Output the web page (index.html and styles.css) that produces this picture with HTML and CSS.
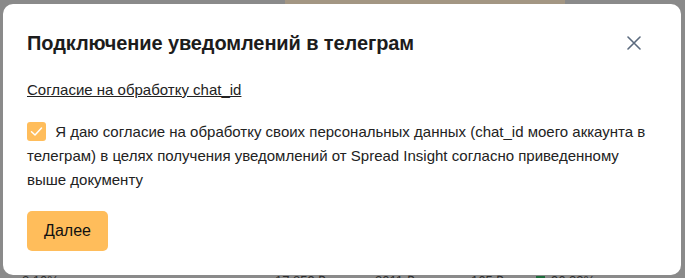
FILE: index.html
```html
<!DOCTYPE html>
<html>
<head>
	<meta charset="utf-8">
	<title>Подключение уведомлений</title>
	<link rel="stylesheet" href="styles.css">
</head>
<body>
	<div class="page">
		<div class="page-top"><span class="tab"></span></div>
		<div class="page-row">
			<span class="cell c1">2,10%</span>
			<span class="cell c2">17 859 ₽</span>
			<span class="cell c3">2011 ₽</span>
			<span class="cell c4">165 ₽</span>
			<span class="cell c5"><i class="sq"></i>96,22%</span>
		</div>
	</div>

	<div class="overlay">
		<div class="modal">
			<div class="modal-head">
				<h2>Подключение уведомлений в телеграм</h2>
				<button class="close" type="button" aria-label="Закрыть">
					<svg width="14" height="14" viewBox="0 0 14 14">
						<path d="M1 1L13 13M13 1L1 13" stroke="#5b6a7e" stroke-width="1.6" stroke-linecap="round"/>
					</svg>
				</button>
			</div>
			<a class="doc" href="#">Согласие на обработку chat_id</a>
			<label class="agree">
				<span class="check">
					<svg width="19" height="19" viewBox="0 0 19 19">
						<path d="M4.5 9.8L8 13L14.5 6" fill="none" stroke="#fff" stroke-width="1.5" stroke-linecap="round" stroke-linejoin="round"/>
					</svg>
				</span>
				Я даю согласие на обработку своих персональных данных (chat_id моего аккаунта в телеграм) в целях получения уведомлений от Spread Insight согласно приведенному выше документу
			</label>
			<button class="next" type="button">Далее</button>
		</div>
	</div>
</body>
</html>
```

FILE: styles.css
```css
body{
	margin: 0;
	font-family: "Liberation Sans", Arial, sans-serif;
	color: #1e1e1e;
	background-color: #8a8a8a;
	width: 685px;
	height: 278px;
	overflow: hidden;
}
.page{
	height: 278px;
	display: flex;
	flex-direction: column;
	justify-content: space-between;
}
.page-top{
	padding-left: 285px;
}
.tab{
	display: block;
	width: 280px;
	height: 4px;
	background-color: #a39683;
}
.page-row{
	display: flex;
	height: 10px;
	font-size: 13px;
	color: #2d2d2d;
	line-height: 26px;
	padding-left: 22px;
}
.cell{
	display: inline-block;
}
.c1{ width: 253px; }
.c2{ width: 100px; }
.c3{ width: 96px; }
.c4{ width: 65px; }
.sq{
	display: inline-block;
	width: 9px;
	height: 9px;
	background: #1d6b3a;
	margin-right: 6px;
}

.overlay{
	position: absolute;
	left: 3px;
	top: 4px;
}
.modal{
	width: 678px;
	height: 271px;
	box-sizing: border-box;
	background: #fff;
	border-radius: 10px;
	padding: 27px 24px 0 24px;
}
.modal-head{
	display: flex;
	align-items: center;
	justify-content: space-between;
}
.modal-head h2{
	margin: 0;
	font-size: 20px;
	line-height: 24px;
	font-weight: bold;
	color: #1c1c1c;
	letter-spacing: -0.1px;
}
.close{
	border: 0;
	background: none;
	padding: 0;
	margin-right: 16px;
	width: 14px;
	height: 14px;
	display: flex;
}
.doc{
	display: inline-block;
	margin-top: 26px;
	font-size: 15px;
	line-height: 18px;
	color: #222;
	text-decoration: underline;
}
.agree{
	display: block;
	margin-top: 21px;
	font-size: 15px;
	line-height: 24px;
	color: #222;
}
.check{
	display: inline-block;
	vertical-align: -4px;
	width: 19px;
	height: 19px;
	background: #ffbd5b;
	border-radius: 3px;
	margin-right: 5px;
}
.check svg{
	display: block;
}
.next{
	display: block;
	margin-top: 19px;
	width: 81px;
	height: 40px;
	border: 0;
	border-radius: 5px;
	background: #ffbd5b;
	font-family: "Liberation Sans", Arial, sans-serif;
	font-size: 16px;
	color: #111;
	padding: 0;
}
```
